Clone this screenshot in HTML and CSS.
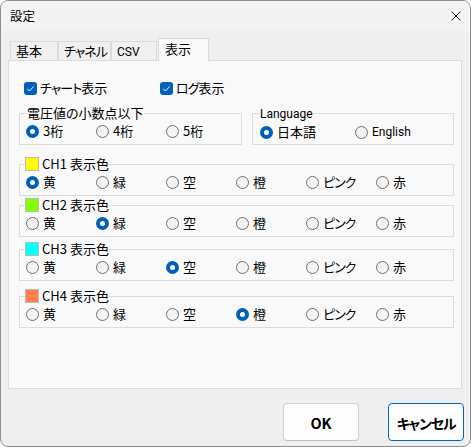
FILE: index.html
```html
<!DOCTYPE html>
<html lang="ja">
<head>
<meta charset="utf-8">
<title>設定</title>
<link rel="stylesheet" href="styles.css">
</head>
<body>
<div class="window">
  <div class="titlebar">
    <span class="title">設定</span>
    <span class="close"><svg width="10" height="10" viewBox="0 0 10 10"><path d="M0.5 0.5L9.5 9.5M9.5 0.5L0.5 9.5" stroke="#1b1b1b" stroke-width="1" fill="none"/></svg></span>
  </div>
  <div class="tabs">
    <div class="tab tab-kihon">基本</div>
    <div class="tab tab-channel"><span class="kana">チャネル</span></div>
    <div class="tab tab-csv"><span class="latin">CSV</span></div>
    <div class="tab tab-active">表示</div>
  </div>
  <div class="panel">
    <div class="check-row">
      <div class="check check-chart"><svg class="box" width="13" height="13" viewBox="0 0 13 13"><rect x="0" y="0" width="13" height="13" rx="3" fill="#005fb8"/><path d="M3.2 6.8L5.4 9L9.8 4.4" stroke="#fff" stroke-width="1" fill="none"/></svg><span><span class="kana">チャート</span>表示</span></div>
      <div class="check"><svg class="box" width="13" height="13" viewBox="0 0 13 13"><rect x="0" y="0" width="13" height="13" rx="3" fill="#005fb8"/><path d="M3.2 6.8L5.4 9L9.8 4.4" stroke="#fff" stroke-width="1" fill="none"/></svg><span><span class="kana">ログ</span>表示</span></div>
    </div>
    <div class="group-row">
      <fieldset class="group group-digits">
        <legend>電圧値の小数点以下</legend>
        <div class="radios">
          <span class="radio"><i class="dot on"></i>3桁</span>
          <span class="radio"><i class="dot"></i>4桁</span>
          <span class="radio"><i class="dot"></i>5桁</span>
        </div>
      </fieldset>
      <fieldset class="group group-lang">
        <legend><span class="latin">Language</span></legend>
        <div class="radios">
          <span class="radio radio-wide"><i class="dot on"></i>日本語</span>
          <span class="radio radio-wide"><i class="dot"></i><span class="latin">English</span></span>
        </div>
      </fieldset>
    </div>
    <fieldset class="group group-ch ch1">
      <legend class="ch-legend"><span class="swatch sw-yellow"></span>CH1 表示色</legend>
      <div class="radios">
        <span class="radio"><i class="dot on"></i>黄</span>
        <span class="radio"><i class="dot"></i>緑</span>
        <span class="radio"><i class="dot"></i>空</span>
        <span class="radio"><i class="dot"></i>橙</span>
        <span class="radio"><i class="dot"></i><span class="kana">ピンク</span></span>
        <span class="radio"><i class="dot"></i>赤</span>
      </div>
    </fieldset>
    <fieldset class="group group-ch ch2">
      <legend class="ch-legend"><span class="swatch sw-green"></span>CH2 表示色</legend>
      <div class="radios">
        <span class="radio"><i class="dot"></i>黄</span>
        <span class="radio"><i class="dot on"></i>緑</span>
        <span class="radio"><i class="dot"></i>空</span>
        <span class="radio"><i class="dot"></i>橙</span>
        <span class="radio"><i class="dot"></i><span class="kana">ピンク</span></span>
        <span class="radio"><i class="dot"></i>赤</span>
      </div>
    </fieldset>
    <fieldset class="group group-ch ch3">
      <legend class="ch-legend"><span class="swatch sw-cyan"></span>CH3 表示色</legend>
      <div class="radios">
        <span class="radio"><i class="dot"></i>黄</span>
        <span class="radio"><i class="dot"></i>緑</span>
        <span class="radio"><i class="dot on"></i>空</span>
        <span class="radio"><i class="dot"></i>橙</span>
        <span class="radio"><i class="dot"></i><span class="kana">ピンク</span></span>
        <span class="radio"><i class="dot"></i>赤</span>
      </div>
    </fieldset>
    <fieldset class="group group-ch ch4">
      <legend class="ch-legend"><span class="swatch sw-coral"></span>CH4 表示色</legend>
      <div class="radios">
        <span class="radio"><i class="dot"></i>黄</span>
        <span class="radio"><i class="dot"></i>緑</span>
        <span class="radio"><i class="dot"></i>空</span>
        <span class="radio"><i class="dot on"></i>橙</span>
        <span class="radio"><i class="dot"></i><span class="kana">ピンク</span></span>
        <span class="radio"><i class="dot"></i>赤</span>
      </div>
    </fieldset>
  </div>
  <div class="actions">
    <button class="btn">OK</button>
    <button class="btn btn-default"><span class="kana btn-kana">キャンセル</span></button>
  </div>
</div>
</body>
</html>
```
FILE: styles.css
```css
* { box-sizing: border-box; }
html, body { margin: 0; padding: 0; background: #ffffff; }
body {
  font-family: "Noto Sans CJK JP", "Noto Sans", sans-serif;
  font-size: 13px;
  line-height: 16px;
  color: #000;
  font-feature-settings: "palt";
}
.kana { letter-spacing: -1px; }
.latin { font-family: Roboto, "Noto Sans", sans-serif; font-size: 12px; }
.window {
  width: 471px;
  height: 447px;
  border: 1px solid #8e8e8e;
  border-radius: 8px;
  background: #efefef;
  overflow: hidden;
  display: flex;
  flex-direction: column;
}
.titlebar {
  height: 30px;
  flex: none;
  background: #f3f3f3;
  display: flex;
  align-items: center;
  justify-content: space-between;
  padding: 0 9px 0 9px;
}
.title { font-size: 12.5px; }
.close { width: 10px; height: 10px; display: flex; }
.tabs {
  display: flex;
  align-items: flex-end;
  height: 22px;
  flex: none;
  margin: 7px 0 0 9px;
  position: relative;
  z-index: 1;
}
.tab {
  height: 19px;
  border: 1px solid #dadada;
  border-bottom: none;
  background: #f0f0f0;
  padding-left: 5px;
  line-height: 18px;
  white-space: nowrap;
  overflow: hidden;
}
.tab-kihon { width: 48px; }
.tab-channel { width: 53px; }
.tab-csv { width: 46px; }
.tab-active {
  width: 51px;
  height: 23px;
  margin-left: 1px;
  margin-bottom: -1px;
  background: #f9f9f9;
  padding-left: 6px;
  line-height: 20px;
}
.panel {
  flex: none;
  height: 329px;
  margin: 0 8px 0 7px;
  border: 1px solid #dcdcdc;
  background: #f9f9f9;
  padding: 0 7px 0 10px;
}
.check-row {
  display: flex;
  height: 16px;
  margin-top: 19px;
  padding-left: 5px;
}
.check { display: flex; align-items: center; gap: 3px; white-space: nowrap; }
.check-chart { width: 136px; }
.box { display: block; flex: none; }
.group-row { display: flex; gap: 10px; margin-top: 9px; }
.group {
  margin: 0;
  min-width: 0;
  border: 1px solid #dcdcdc;
  padding: 2px 0 4px 6px;
}
.group legend {
  padding: 0;
  margin-left: 1px;
  line-height: 16px;
  white-space: nowrap;
}
.group-digits { width: 223px; }
.group-lang { width: 202px; padding-left: 7px; }
.group-lang legend { margin-left: 0; }
.group-ch { width: 435px; padding-bottom: 5px; }
.ch1 { margin-top: 11px; }
.ch2 { margin-top: 1px; }
.ch3 { margin-top: 4px; }
.ch4 { margin-top: 7px; }
.group .ch-legend { display: flex; align-items: center; gap: 3px; margin-left: -1px; }
.swatch { width: 14px; height: 14px; border: 1px solid #b9b9b9; display: block; }
.sw-yellow { background: #ffff00; }
.sw-green { background: #80ff00; }
.sw-cyan { background: #00ffff; }
.sw-coral { background: #ff7f50; }
.radios { display: flex; height: 16px; }
.radio { width: 70px; flex: none; display: flex; align-items: center; gap: 4px; white-space: nowrap; }
.radio-wide { width: 95px; }
.dot {
  width: 13px;
  height: 13px;
  flex: none;
  border-radius: 50%;
  border: 1px solid #6f6f6f;
  background: #f3f3f3;
}
.dot.on { border: 4px solid #005fb8; background: #ffffff; }
.actions {
  flex: none;
  display: flex;
  justify-content: flex-end;
  gap: 29px;
  margin-top: 14px;
  padding-right: 6px;
}
.btn {
  width: 76px;
  height: 38px;
  border: 1px solid #d0d0d0;
  border-bottom-color: #bdbdbd;
  border-radius: 4px;
  background: #fdfdfd;
  font-family: "Noto Sans CJK JP", "Noto Sans", sans-serif;
  font-feature-settings: "palt";
  font-size: 14.5px;
  font-weight: bold;
  color: #000;
  padding: 0;
}
.btn-default { border: 1px solid #0067c0; }
.btn-kana { font-size: 14px; letter-spacing: -1.2px; }
```
